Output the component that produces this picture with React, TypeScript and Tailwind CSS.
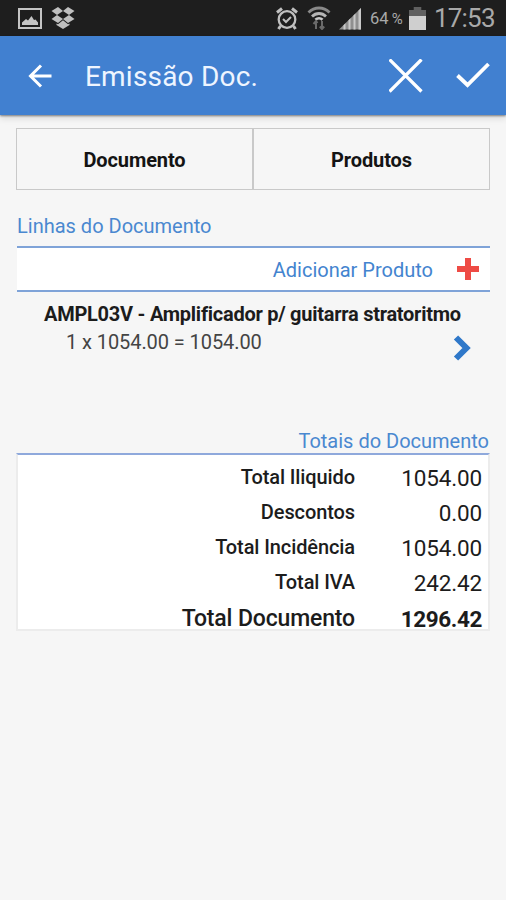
import type { ReactNode } from "react";

type Total = {
  label: string;
  value: string;
  strong?: boolean;
};

const tabs = ["Documento", "Produtos"];

const totals: Total[] = [
  { label: "Total Iliquido", value: "1054.00" },
  { label: "Descontos", value: "0.00" },
  { label: "Total Incidência", value: "1054.00" },
  { label: "Total IVA", value: "242.42" },
  { label: "Total Documento", value: "1296.42", strong: true },
];

function StatusBar() {
  return (
    <div className="flex h-9 items-center bg-[#1e1e1e] pl-[18px] pr-[11px] text-[#a9a9a9]">
      <svg className="h-[21px] w-[24px]" viewBox="0 0 24 21" fill="none">
        <rect x="1" y="1" width="22" height="19" stroke="#c4c4c4" strokeWidth="2" />
        <path d="M4 17v-2.500l4-3.500 2 1.500 3.500-4.500 2.500 4 1.500-.5 2.500 3v2.500z" fill="#c4c4c4" />
      </svg>
      <svg className="ml-[9px] h-[22px] w-[24px]" viewBox="0 0 24 22" fill="#c0c0c0">
        <path d="M7 0l5 4-6 4-5.500-4zM17 0l6.500 4-5.500 4-6-4zM.5 12L6 8l6 4-5 4zM23.500 12L18 8l-6 4 5 4zM12 13.200l5 4 1.500-.8v1.600L12 22l-6.500-4v-1.600l1.500.8z" />
      </svg>

      <div className="ml-auto flex items-center">
        <svg className="h-[23px] w-[22px]" viewBox="0 0 22 23" fill="none" stroke="#c0c0c0" strokeWidth="2.300">
          <circle cx="11" cy="12.500" r="8.300" />
          <path d="M1 5.500L6 1.500M21 5.500L16 1.500M4.500 19l-2 3M17.500 19l2 3" strokeWidth="3" />
          <path d="M7 12l3 3 5-5" strokeWidth="2" />
        </svg>
        <svg className="ml-[9px] h-[24px] w-[24px]" viewBox="0 0 24 24" fill="none">
          <path d="M1.500 6.500C7.500 .5 16.500 .5 22.500 6.500" stroke="#8a8a8a" strokeWidth="2.800" />
          <path d="M5 10.500c4-4 10-4 14 0" stroke="#b5b5b5" strokeWidth="2.800" />
          <path d="M8.500 13.800c2-2 5-2 7 0" stroke="#c8c8c8" strokeWidth="2.800" />
          <path d="M9 23v-8M6.500 18L9 15l1.500 2M15 15v8M12.800 20.500L15 23l2.200-2.500" stroke="#6a6a6a" strokeWidth="2" />
        </svg>
        <svg className="ml-[7px] h-[23px] w-[24px]" viewBox="0 0 24 23">
          <path d="M1 22.500L23 1v21.500z" fill="#8f8f8f" />
          <path d="M20.500 3.500L23 1v21.500h-2.500zM15.500 8.500l2-2v16h-2zM10.500 13.300l2-2v11.200h-2zM5.500 18.200l2-2v6.300h-2z" fill="#c9c9c9" />
        </svg>
        <span className="ml-[8px] w-[39px] whitespace-nowrap pt-[2px] text-[16.500px]">
          64 <span className="-ml-px text-[15px]">%</span>
        </span>
        <svg className="h-[23px] w-[17px]" viewBox="0 0 18 23" preserveAspectRatio="none">
          <path d="M5 0h8v3h5v6H0V3h5z" fill="#606060" />
          <path d="M0 9h18v14H0z" fill="#cfcfcf" />
        </svg>
        <span className="ml-[8px] w-[61px] whitespace-nowrap text-[26px] leading-none tracking-[-0.8px]">17:53</span>
      </div>
    </div>
  );
}

function Toolbar() {
  return (
    <header className="relative flex h-[79px] items-center bg-[#4180d0] pl-[28px] pr-[16px] text-white shadow-[0_1px_2px_rgba(0,0,0,0.45),0_4px_6px_rgba(0,0,0,0.1)]">
      <svg className="h-[24px] w-[24px]" viewBox="0 0 24 24" fill="none" stroke="currentColor" strokeWidth="3">
        <path d="M23.500 12H3M13 1.500L2.500 12 13 22.500" />
      </svg>
      <h1 className="ml-[33px] mt-[2px] whitespace-nowrap text-[28px] leading-none tracking-[0.2px] text-[#eef5ff]">Emissão Doc.</h1>
      <svg className="ml-auto h-[34px] w-[34px]" viewBox="0 0 34 34" fill="none" stroke="currentColor" strokeWidth="3.300">
        <path d="M.5 .5l32 32M32.500 .5l-32 32" />
      </svg>
      <svg className="-mt-[2px] ml-[33px] h-[26px] w-[34px]" viewBox="0 0 34 26" fill="none" stroke="currentColor" strokeWidth="3.800">
        <path d="M1.500 13.500l10 9.500 21-21" />
      </svg>
    </header>
  );
}

function SectionTitle({ children }: { children: ReactNode }) {
  return <h2 className="whitespace-nowrap text-[20px] leading-6 text-[#4a88d0]">{children}</h2>;
}

export default function App() {
  return (
    <div className="min-h-[900px] w-full bg-[#f6f6f6] font-['Roboto',sans-serif] text-[#1c1c1c]">
      <StatusBar />
      <Toolbar />

      <main className="px-4 pt-[13px]">
        <div className="grid h-[62px] grid-cols-[237px_1fr] border border-[#c9c9c9]">
          {tabs.map((tab) => (
            <button
              key={tab}
              className="border-[#c9c9c9] pt-[2px] text-[20px] font-bold tracking-[-0.1px] text-[#141414] first:border-r-2"
            >
              {tab}
            </button>
          ))}
        </div>

        <section className="ml-px mt-[24px]">
          <SectionTitle>Linhas do Documento</SectionTitle>
          <div className="mt-[8px] flex h-[46px] items-center justify-end border-y-2 border-[#7fa3d8] bg-white pr-[11px]">
            <span className="mt-[2px] whitespace-nowrap text-[20px] text-[#4384cf]">Adicionar Produto</span>
            <svg className="ml-[24px] h-[22px] w-[22px]" viewBox="0 0 22 22">
              <path d="M8 0h6v8h8v6h-8v8H8v-8H0V8h8z" fill="#ee4b45" />
            </svg>
          </div>

          <div className="flex h-[137px] justify-between pl-[27px] pr-[19px] pt-[8px]">
            <div className="w-[400px]">
              <p className="whitespace-nowrap text-[20px] font-bold leading-7 tracking-[-0.26px]">AMPL03V - Amplificador p/ guitarra stratoritmo</p>
              <p className="whitespace-nowrap pl-[22px] text-[20px] leading-7 tracking-[-0.08px] text-[#444]">1 x 1054.00 = 1054.00</p>
            </div>
            <svg className="mt-[35px] h-[26px] w-[18px] shrink-0" viewBox="0 0 18 26" fill="none">
              <path d="M3 2.500L13.500 13 3 23.500" stroke="#2f78c9" strokeWidth="6" />
            </svg>
          </div>
        </section>

        <section>
          <div className="flex justify-end pr-px">
            <SectionTitle>Totais do Documento</SectionTitle>
          </div>
          <div className="h-[178px] border-x-2 border-b-2 border-t-2 border-x-[#ececec] border-b-[#ececec] border-t-[#8fa9dc] bg-white pr-[6px] pt-[5px]">
            {totals.map(({ label, value, strong }) => (
              <div key={label} className="flex h-[35px] items-center justify-end whitespace-nowrap">
                <span
                  className={
                    strong
                      ? "mt-[4px] text-[23px] font-medium tracking-[-0.15px]"
                      : "-mt-[1px] text-[20px] font-medium tracking-[-0.1px]"
                  }
                >
                  {label}
                </span>
                <span
                  className={
                    strong
                      ? "mt-[4px] w-[127px] text-right text-[22.500px] font-bold tracking-[-0.4px]"
                      : "mt-[3px] w-[127px] text-right text-[22.500px] tracking-[-0.15px]"
                  }
                >
                  {value}
                </span>
              </div>
            ))}
          </div>
        </section>
      </main>
    </div>
  );
}
